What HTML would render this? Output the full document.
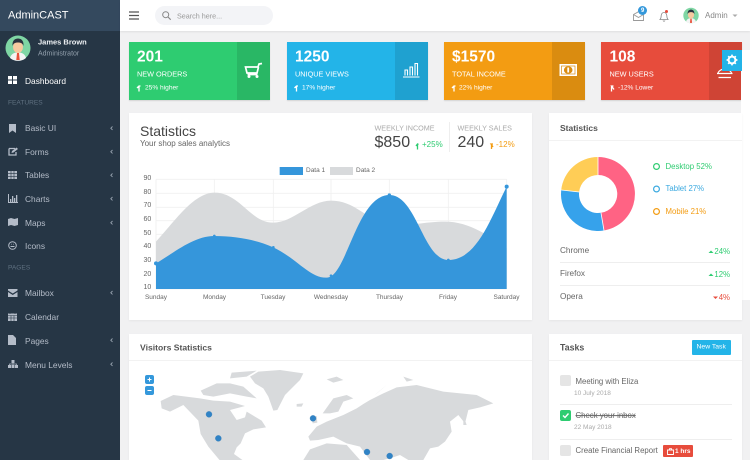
<!DOCTYPE html>
<html><head><meta charset="utf-8">
<style>
html,body{margin:0;padding:0}
body{width:750px;height:460px;overflow:hidden;position:relative;background:#f1f1f2;font-family:"Liberation Sans",sans-serif;color:#555;filter:blur(.3px)}
.t{position:absolute;white-space:nowrap;line-height:1;transform:translateY(-50%)}
.b{position:absolute}
svg{position:absolute;overflow:visible}
.s{font-size:8.4px;color:#b4bcc8;left:25px}
.h{font-size:6.6px;color:#5f7080;left:8px}
.c{position:absolute;top:42px;width:141px;height:58px;box-shadow:0 1px 1px rgba(0,0,0,.12)}
.c i{position:absolute;right:0;top:0;width:33px;height:58px;background:rgba(0,0,0,.1)}
.n{font-size:15.5px;font-weight:bold;color:#fff;top:57px}
.l{font-size:7.300px;color:#fff;top:73.5px}
.m{font-size:6.600px;color:#fff;top:88.5px}
.w{position:absolute;background:#fff;box-shadow:0 1px 2px rgba(0,0,0,.05)}
.r{position:absolute;height:1px;background:#eee}
.x{top:298px;font-size:6.500px;color:#666;transform:translate(-50%,-50%)}
</style></head><body>

<!-- sidebar -->
<div class="b" style="left:0;top:0;width:120px;height:460px;background:#263645"></div>
<div class="b" style="left:0;top:0;width:120px;height:31px;background:#34495e"></div>
<div class="t" style="left:8px;top:15.5px;font-size:11px;color:#fff">AdminCAST</div>
<svg style="left:5px;top:35px" width="26" height="26" viewBox="0 0 26 26"><circle cx="13" cy="13" r="12.5" fill="#7fd6a4"/><path d="M5 23c1-4 4-5.500 8-5.500s7 1.500 8 5.500a12.500 12.500 0 0 1-16 0z" fill="#f4f4f4"/><path d="M12 18h2l.7 7h-3.400z" fill="#e8503a"/><ellipse cx="13" cy="12" rx="5" ry="6" fill="#f7c9a0"/><path d="M7.500 11c-.5-6 3-7.500 5.500-7.500s6 1.500 5.500 7.500c-1-3-3-3.500-5.500-3.500s-4.500.5-5.500 3.500z" fill="#2b3440"/></svg>
<div class="t" style="left:38px;top:42px;font-size:7.500px;font-weight:bold;color:#eef1f4">James Brown</div>
<div class="t" style="left:38px;top:54px;font-size:7px;color:#93a0ad">Administrator</div>

<svg style="left:8px;top:76px" width="9" height="8"><path d="M0 0h4v3.500H0zM5 0h4v3.500H5zM0 4.500h4V8H0zM5 4.500h4V8H5z" fill="#fff"/></svg>
<div class="t s" style="top:80.5px;color:#fff">Dashboard</div>
<div class="t h" style="top:104px">FEATURES</div>
<svg style="left:8px;top:124px" width="9" height="9"><path d="M1 0h7v9L4.500 6.500 1 9z" fill="#b4bcc8"/></svg>
<div class="t s" style="top:128px">Basic UI</div>
<svg style="left:8px;top:147px" width="10" height="9"><path d="M1 1.500h6M1 1.500v6.500h7V5" stroke="#b4bcc8" fill="none" stroke-width="1.300"/><path d="M3.500 6l.5-2L8.500.5 10 2 5.500 5.500z" fill="#b4bcc8"/></svg>
<div class="t s" style="top:151.500px">Forms</div>
<svg style="left:8px;top:171px" width="9" height="8"><path d="M0 0h9v8H0z" fill="#b4bcc8"/><path d="M3 0v8M6 0v8M0 2.700h9M0 5.300h9" stroke="#263645" stroke-width=".6"/></svg>
<div class="t s" style="top:175px">Tables</div>
<svg style="left:8px;top:194px" width="10" height="9"><path d="M.5 0v8.500H10" stroke="#b4bcc8" fill="none"/><path d="M2 5h1.300v3H2zM4 2h1.300v6H4zM6 4h1.300v4H6zM8 1h1.300v7H8z" fill="#b4bcc8"/></svg>
<div class="t s" style="top:199px">Charts</div>
<svg style="left:8px;top:218px" width="10" height="8"><path d="M0 1l3-1 3.500 1L10 0v7L6.500 8 3 7 0 8z" fill="#b4bcc8"/></svg>
<div class="t s" style="top:222.500px">Maps</div>
<svg style="left:8px;top:241px" width="9" height="9"><circle cx="4.500" cy="4.500" r="3.800" fill="none" stroke="#b4bcc8"/><path d="M2.500 5.500h4M3 3.200h.6M5.400 3.200H6" stroke="#b4bcc8"/></svg>
<div class="t s" style="top:246px">Icons</div>
<div class="t h" style="top:269px">PAGES</div>
<svg style="left:8px;top:289px" width="9.500" height="8"><path d="M0 0h9.500v1.500L4.750 4.500 0 1.500zM0 3l4.750 3L9.500 3v5H0z" fill="#b4bcc8"/></svg>
<div class="t s" style="top:293px">Mailbox</div>
<svg style="left:8px;top:312px" width="9" height="9"><path d="M0 1.500h9V9H0z" fill="#b4bcc8"/><path d="M2 0v2M7 0v2M0 3.500h9M3 3.500V9M6 3.500V9M0 6h9" stroke="#263645" stroke-width=".6"/></svg>
<div class="t s" style="top:317px">Calendar</div>
<svg style="left:8px;top:335px" width="8" height="10"><path d="M0 0h5l3 3v7H0z" fill="#b4bcc8"/></svg>
<div class="t s" style="top:340.500px">Pages</div>
<svg style="left:8px;top:360px" width="10" height="8"><path d="M3.500 0h3v3h-3zM0 5h3v3H0zM3.500 5h3v3h-3zM7 5h3v3H7z" fill="#b4bcc8"/><path d="M5 3v2M1.500 5V4h7v1" stroke="#b4bcc8" fill="none" stroke-width=".7"/></svg>
<div class="t s" style="top:364.500px">Menu Levels</div>
<svg style="left:0;top:0" width="120" height="460"><g fill="none" stroke="#96a2ae" stroke-width=".9"><path d="M112.500 126.500l-1.700 1.700 1.700 1.700M112.500 150l-1.700 1.700 1.700 1.700M112.500 173.500l-1.700 1.700 1.700 1.700M112.500 197l-1.700 1.700 1.700 1.700M112.500 221l-1.700 1.700 1.700 1.700M112.500 291l-1.700 1.700 1.700 1.700M112.500 338.500l-1.700 1.700 1.700 1.700M112.500 362.500l-1.700 1.700 1.700 1.700"/></g></svg>

<!-- topbar -->
<div class="b" style="left:120px;top:0;width:630px;height:31px;background:#fff;box-shadow:0 1px 2px rgba(0,0,0,.08)"></div>
<svg style="left:129px;top:11px" width="10" height="9"><path d="M0 1h10M0 4.500h10M0 8h10" stroke="#555" stroke-width="1.200"/></svg>
<div class="b" style="left:155px;top:6px;width:118px;height:19px;border-radius:10px;background:#f3f4f7"></div>
<svg style="left:162px;top:11px" width="9" height="9"><circle cx="3.700" cy="3.700" r="3" fill="none" stroke="#888" stroke-width="1"/><path d="M6 6l2.700 2.700" stroke="#888" stroke-width="1.100"/></svg>
<div class="t" style="left:177px;top:15.500px;font-size:7.200px;color:#9a9a9a">Search here...</div>
<svg style="left:633px;top:11px" width="11" height="10"><path d="M.5 3.500L5.500.7l5 2.800v6h-10zM.5 3.500l5 3 5-3" fill="none" stroke="#999" stroke-width=".9"/></svg>
<div class="b" style="left:638px;top:6px;width:9px;height:9px;border-radius:50%;background:#3498db"></div>
<div class="t" style="left:641px;top:10.500px;font-size:6px;font-weight:bold;color:#fff">9</div>
<svg style="left:659px;top:11px" width="10" height="11"><path d="M1 8.500c1.200-1 1-2.500 1.200-4C2.500 2.500 3.800 1.500 5 1.500s2.500 1 2.800 3c.2 1.500 0 3 1.200 4zM4 9.500c.3 1 1.700 1 2 0" fill="none" stroke="#888" stroke-width=".8"/></svg>
<div class="b" style="left:665px;top:10px;width:3px;height:3px;border-radius:50%;background:#e74c3c"></div>
<svg style="left:683px;top:7px" width="16" height="17" viewBox="0 0 26 26"><circle cx="13" cy="13" r="12.500" fill="#7fd6a4"/><path d="M5 23c1-4 4-5.500 8-5.500s7 1.500 8 5.500a12.500 12.500 0 0 1-16 0z" fill="#f4f4f4"/><path d="M12 18h2l.7 7h-3.400z" fill="#e8503a"/><ellipse cx="13" cy="12" rx="5" ry="6" fill="#f7c9a0"/><path d="M7.500 11c-.5-6 3-7.500 5.500-7.500s6 1.500 5.500 7.500c-1-3-3-3.500-5.500-3.500s-4.500.5-5.500 3.500z" fill="#2b3440"/></svg>
<div class="t" style="left:705px;top:16px;font-size:8px;color:#888">Admin</div>
<svg style="left:732px;top:14px" width="6" height="4"><path d="M.5.500L3 3 5.500.500z" fill="#aaa"/></svg>

<!-- stat cards -->
<div class="c" style="left:129px;background:#2ecc71"><i></i></div>
<div class="t n" style="left:137px">201</div><div class="t l" style="left:137px">NEW ORDERS</div><div class="t m" style="left:145px">25% higher</div>
<div class="c" style="left:286.500px;background:#23b4e8"><i></i></div>
<div class="t n" style="left:295px">1250</div><div class="t l" style="left:295px">UNIQUE VIEWS</div><div class="t m" style="left:302px">17% higher</div>
<div class="c" style="left:443.500px;background:#f39c12"><i></i></div>
<div class="t n" style="left:452px">$1570</div><div class="t l" style="left:452px">TOTAL INCOME</div><div class="t m" style="left:459px">22% higher</div>
<div class="c" style="left:601px;background:#e74c3c"><i></i></div>
<div class="t n" style="left:609.500px">108</div><div class="t l" style="left:609.500px">NEW USERS</div><div class="t m" style="left:618px">-12% Lower</div>
<svg style="left:0;top:0" width="750" height="110" fill="none" stroke="#fff" stroke-width="1">
<path d="M139 91.500v-5.500M137 88l2-2h1.500M296.500 91.500v-5.500M294.500 88l2-2h1.500M454 91.500v-5.500M452 88l2-2h1.500M611.500 86v5.500M613.500 86h-2l2.500 3.500" stroke-width="1.300"/>
<path d="M262 63.500l-3 .5-1 3h-12.500l1.500 6h10l1.500-6M247.500 74.500h10" stroke-width="1.700"/><circle cx="249" cy="76.500" r="1.500" fill="#fff" stroke="none"/><circle cx="257" cy="76.500" r="1.500" fill="#fff" stroke="none"/>
<path d="M403 77h16.500M405 75.500V70h2.500v5.500M410 75.500V67h2.500v8.500M415 75.500V63.500h2.500v12" stroke-width="1.100"/>
<rect x="559.500" y="64" width="17.500" height="12" fill="#fff" stroke="none"/><rect x="561.500" y="66" width="13.500" height="8" fill="none" stroke="#da8c10" stroke-width=".7"/><ellipse cx="568.200" cy="70" rx="4.300" ry="3.800" fill="#da8c10" stroke="none"/><rect x="567.300" y="67.500" width="1.800" height="5" fill="#fff" stroke="none"/>
<path d="M718 73a7 5.500 0 0 1 13.500 0M717 73.500h15.500M718.500 77.500h12.500" stroke-width="1.200"/>
</svg>

<!-- settings panel strip -->
<div class="b" style="left:741px;top:50px;width:9px;height:250px;background:#fff"></div>
<div class="b" style="left:722px;top:50px;width:20px;height:20.500px;background:#23b4e8"></div>
<svg style="left:726px;top:54px" width="12" height="12" viewBox="0 0 12 12"><circle cx="6" cy="6" r="3.400" fill="none" stroke="#fff" stroke-width="2"/><path d="M6 .6v2M6 9.400v2M.6 6h2M9.400 6h2M2.200 2.200l1.400 1.400M8.400 8.400l1.400 1.400M2.200 9.800l1.400-1.400M8.400 3.600l1.400-1.400" stroke="#fff" stroke-width="1.700"/></svg>

<!-- main chart card -->
<div class="w" style="left:129px;top:113px;width:403px;height:207px"></div>
<div class="t" style="left:140px;top:131px;font-size:14px;color:#444">Statistics</div>
<div class="t" style="left:140px;top:144px;font-size:8px;color:#666">Your shop sales analytics</div>
<div class="t" style="left:374.500px;top:128px;font-size:7.200px;color:#aaa">WEEKLY INCOME</div>
<div class="t" style="left:374.500px;top:142.500px;font-size:16px;color:#444">$850</div>
<div class="t" style="left:422px;top:145px;font-size:8px;color:#2ecc71">+25%</div>
<div class="b" style="left:449px;top:122px;width:1px;height:30px;background:#eee"></div>
<div class="t" style="left:457.500px;top:128px;font-size:7.200px;color:#aaa">WEEKLY SALES</div>
<div class="t" style="left:457.500px;top:142.500px;font-size:16px;color:#444">240</div>
<div class="t" style="left:496px;top:145px;font-size:8px;color:#f39c12">-12%</div>
<svg style="left:0;top:0" width="530" height="160" fill="none"><path d="M417.500 149.500v-5M416 146l1.500-2 1 .5" stroke="#2ecc71" stroke-width="1.300"/><path d="M491.500 144v5M493 144h-2l2 3" stroke="#f39c12" stroke-width="1.300"/></svg>

<svg style="left:130px;top:110px" width="400" height="210" viewBox="0 0 1200 630">
<g stroke="#f0f0f0" stroke-width="2.500" fill="none"><path d="M78 208H1130M78 250H1130M78 292H1130M78 332H1130M78 373H1130M78 414H1130M78 455H1130M78 496H1130M78 537H1130"/><path d="M78 208V537M253 208V537M430 208V537M603 208V537M778 208V537M955 208V537M1130 208V537"/></g>
<path d="M78 395C130 340 190 248 253 248C330 248 360 338 430 338C490 338 540 272 603 272C680 272 720 340 778 345C840 350 880 335 945 335C1020 335 1080 380 1130 415L1130 537L78 537Z" fill="#d8dadc"/>
<path d="M78 460C130 430 190 378 253 378C320 378 380 390 430 412C500 445 540 505 590 503C650 503 680 255 778 255C860 255 880 450 955 450C1040 450 1080 330 1130 230L1130 537L78 537Z" fill="#3596db"/>
<g fill="#3596db"><circle cx="78" cy="460" r="6"/><circle cx="253" cy="378" r="4"/><circle cx="430" cy="412" r="4"/><circle cx="603" cy="497" r="4"/><circle cx="778" cy="255" r="5"/><circle cx="955" cy="450" r="4"/><circle cx="1130" cy="230" r="6"/></g>
<rect x="449" y="171" width="70" height="24" fill="#3596db"/><rect x="600" y="171" width="69" height="24" fill="#d8dadc"/>
</svg>
<div class="t" style="left:306px;top:170.500px;font-size:6.500px;color:#666">Data 1</div>
<div class="t" style="left:356px;top:170.500px;font-size:6.500px;color:#666">Data 2</div>
<div style="position:absolute;left:143.500px;top:172.200px;width:8px;font-size:7px;color:#666;line-height:13.640px">90<br>80<br>70<br>60<br>50<br>40<br>30<br>20<br>10</div>
<div class="t x" style="left:156px">Sunday</div>
<div class="t x" style="left:214.500px">Monday</div>
<div class="t x" style="left:273px">Tuesday</div>
<div class="t x" style="left:331px">Wednesday</div>
<div class="t x" style="left:389.500px">Thursday</div>
<div class="t x" style="left:448px">Friday</div>
<div class="t x" style="left:506.500px">Saturday</div>

<!-- right stats card -->
<div class="w" style="left:548.500px;top:113px;width:193px;height:207px"></div>
<div class="r" style="left:548.500px;top:140px;width:193px;background:#f2f2f2"></div>
<div class="t" style="left:560px;top:128px;font-size:8.500px;font-weight:bold;color:#555">Statistics</div>
<svg style="left:560px;top:156px" width="76" height="76" viewBox="0 0 76 76">
<path d="M38 1A37 37 0 0 1 44 74.500L41 56.800A19 19 0 0 0 38 19Z" fill="#ff6384"/>
<path d="M44 74.500A37 37 0 0 1 1.200 34L19.100 36A19 19 0 0 0 41 56.800Z" fill="#36a2eb"/>
<path d="M1.200 34A37 37 0 0 1 38 1L38 19A19 19 0 0 0 19.100 36Z" fill="#ffcd56"/>
<path d="M38 1V19M44 74.500L41 56.800M1.200 34L19.100 36" stroke="#fff" stroke-width=".8"/>
</svg>
<svg style="left:652px;top:161px" width="10" height="58" fill="none" stroke-width="1.200"><circle cx="4.500" cy="5.500" r="2.900" stroke="#2ecc71"/><circle cx="4.500" cy="28" r="2.900" stroke="#3aa9e0"/><circle cx="4.500" cy="50.500" r="2.900" stroke="#f39c12"/></svg>
<div class="t" style="left:665.500px;top:166.500px;font-size:7.800px;color:#2ecc71">Desktop 52%</div>
<div class="t" style="left:665.500px;top:189px;font-size:7.800px;color:#3aa9e0">Tablet 27%</div>
<div class="t" style="left:665.500px;top:211.500px;font-size:7.800px;color:#f39c12">Mobile 21%</div>
<div class="t" style="left:560px;top:251px;font-size:8.200px;color:#666">Chrome</div>
<div class="t" style="left:560px;top:274px;font-size:8.200px;color:#666">Firefox</div>
<div class="t" style="left:560px;top:297px;font-size:8.200px;color:#666">Opera</div>
<div class="r" style="left:560px;top:262px;width:170px"></div>
<div class="r" style="left:560px;top:285px;width:170px"></div>
<div class="t" style="right:20px;top:251.500px;font-size:7.800px;color:#2ecc71">24%</div>
<div class="t" style="right:20px;top:274.500px;font-size:7.800px;color:#2ecc71">12%</div>
<div class="t" style="right:20px;top:297.500px;font-size:7.800px;color:#e74c3c">4%</div>
<svg style="left:700px;top:245px" width="30" height="60"><path d="M8.500 8l2.500-2.500 2.500 2.500zM8.500 31l2.500-2.500 2.500 2.500z" fill="#2ecc71"/><path d="M13 51.500l2.500 2.500 2.500-2.500z" fill="#e74c3c"/></svg>

<!-- visitors card -->
<div class="w" style="left:129px;top:334px;width:403px;height:126px"></div>
<div class="r" style="left:129px;top:360px;width:403px;background:#f2f2f2"></div>
<div class="t" style="left:140px;top:347.500px;font-size:8.600px;font-weight:bold;color:#555">Visitors Statistics</div>
<svg style="left:130px;top:330px" width="400" height="130" viewBox="0 0 1200 390">
<g fill="#d8dadc">
<path d="M360 140L385 125L450 120L520 130L510 150L490 170L465 195L442 240L430 242L415 200L400 175L375 160Z"/>
<path d="M305 128L380 122L350 140L300 145ZM212 182L260 160L300 160L340 170L380 205L350 200L300 190L250 200L220 195Z"/>
<path d="M92 213L130 195L210 205L250 212L300 215L345 228L330 232L300 240L320 270L345 262L350 245L395 272L408 292L370 298L345 310L332 340L320 352L312 372L340 392L270 392L235 350L212 312L205 272L160 225L120 245L95 235Z"/>
<path d="M590 148L620 140L640 150L610 158ZM500 222L520 220L515 230L500 230ZM820 140L850 150L830 155Z"/>
<path d="M545 262L560 258L562 278L548 280ZM578 250L610 205L650 195L670 205L640 215L625 245L600 250Z"/>
<path d="M535 320L560 290L590 275L640 255L680 235L700 222L720 210L760 190L800 172L860 165L940 185L1040 195L1090 220L1050 232L1015 240L1005 280L985 255L960 275L965 305L945 335L925 350L900 355L880 390L835 390L810 375L780 385L760 390L720 390L690 350L650 340L610 320L565 330L540 332Z"/>
<path d="M520 390L540 358L590 340L650 345L690 390Z"/>
<path d="M1000 255L1010 285L1000 285ZM735 195L770 165L740 190Z"/>
</g>
<g fill="#3083c6" stroke="#3b7eb5" stroke-width="1"><circle cx="237" cy="253" r="9"/><circle cx="265" cy="325" r="9"/><circle cx="549" cy="265" r="9"/><circle cx="711" cy="366" r="9"/><circle cx="779" cy="378" r="9"/></g>
</svg>
<div class="b" style="left:145px;top:375px;width:9px;height:9px;border-radius:2px;background:#3498db"></div>
<div class="b" style="left:145px;top:386px;width:9px;height:9px;border-radius:2px;background:#3498db"></div>
<svg style="left:145px;top:375px" width="9" height="20"><path d="M2.500 4.500h4M4.500 2.500v4M2.500 15.500h4" stroke="#fff" stroke-width="1"/></svg>

<!-- tasks card -->
<div class="w" style="left:548.500px;top:334px;width:193px;height:126px"></div>
<div class="r" style="left:548.500px;top:360px;width:193px;background:#f2f2f2"></div>
<div class="t" style="left:560px;top:347.500px;font-size:8.800px;font-weight:bold;color:#555">Tasks</div>
<div class="b" style="left:692px;top:339.500px;width:39px;height:15.500px;background:#23b4e8;border-radius:1px"></div>
<div class="t" style="left:696.500px;top:347.500px;font-size:6.800px;color:#fff">New Task</div>
<div class="b" style="left:560px;top:375px;width:11px;height:11px;border-radius:2px;background:#e5e5e5"></div>
<div class="t" style="left:575.500px;top:381.500px;font-size:7.800px;color:#666">Meeting with Eliza</div>
<div class="t" style="left:574px;top:393.500px;font-size:6.500px;color:#aaa">10 July 2018</div>
<div class="r" style="left:560px;top:404px;width:172px"></div>
<div class="b" style="left:560px;top:410px;width:11px;height:11px;border-radius:2px;background:#2ecc71"></div>
<svg style="left:560px;top:410px" width="11" height="11"><path d="M3 5.500l2 2 3.500-4" fill="none" stroke="#fff" stroke-width="1.400"/></svg>
<div class="t" style="left:575.500px;top:416px;font-size:7.800px;color:#666;text-decoration:line-through">Check your inbox</div>
<div class="t" style="left:574px;top:428px;font-size:6.500px;color:#aaa">22 May 2018</div>
<div class="r" style="left:560px;top:439px;width:172px"></div>
<div class="b" style="left:560px;top:445px;width:11px;height:11px;border-radius:2px;background:#e5e5e5"></div>
<div class="t" style="left:575.500px;top:451px;font-size:7.800px;color:#666">Create Financial Report</div>
<div class="b" style="left:663px;top:445px;width:29.500px;height:12px;background:#e74c3c;border-radius:1px"></div>
<svg style="left:667px;top:447.500px" width="7" height="7"><path d="M.5 2h6v4.500h-6zM2.500 2V.7h2V2" fill="none" stroke="#fff" stroke-width=".9"/></svg>
<div class="t" style="left:675px;top:451.500px;font-size:6.500px;font-weight:bold;color:#fff">1 hrs</div>
</body></html>
